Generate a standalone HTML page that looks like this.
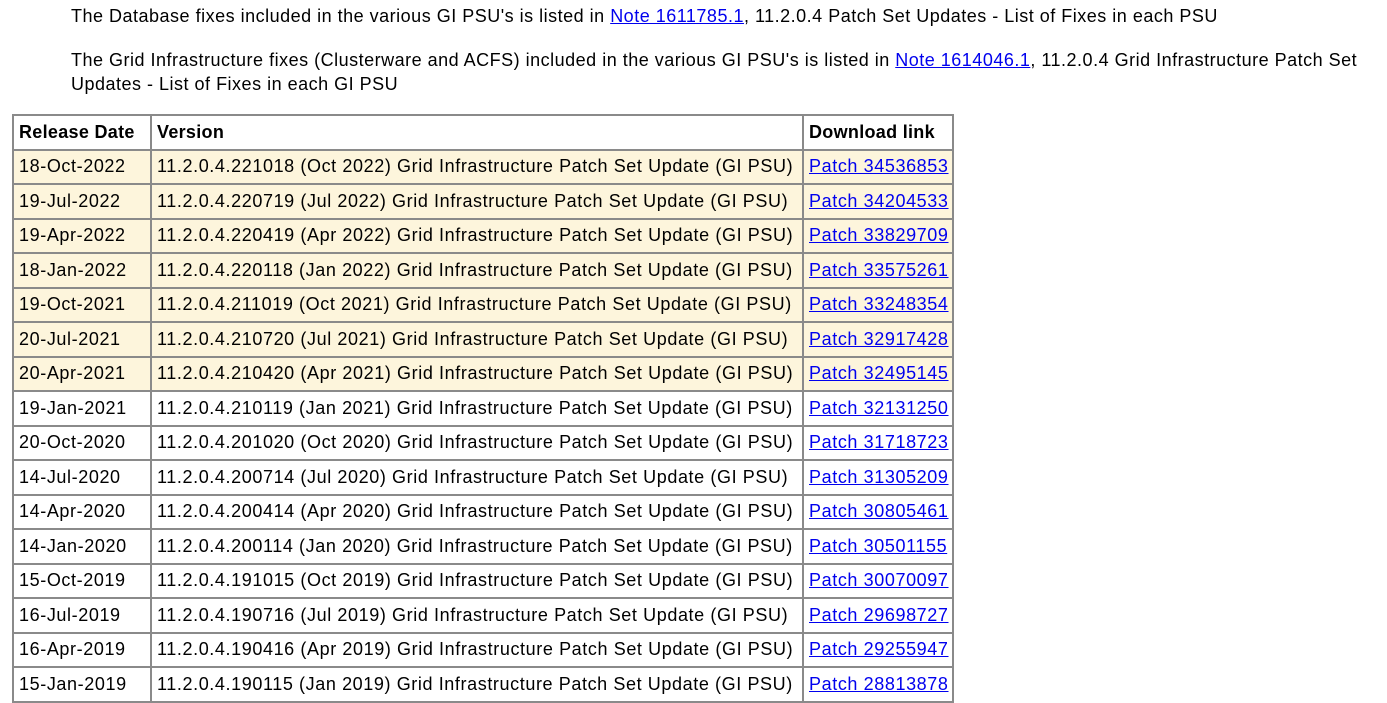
<!DOCTYPE html>
<html><head><meta charset="utf-8"><style>
body{margin:0;background:#fff;font-family:"Liberation Sans",Tahoma,sans-serif;font-size:18px;color:#000;width:1387px;height:702px;overflow:hidden;position:relative;letter-spacing:0.6px}
p{position:absolute;left:71px;margin:0;line-height:24px;width:1310px;letter-spacing:0.5px}
a{color:#0000ee;text-decoration:underline}
table{position:absolute;left:12px;top:114px;border-collapse:collapse;table-layout:fixed;width:940px}
td,th{border:2px solid #8a8a8a;padding:0 0 0 5px;height:32.5px;white-space:nowrap;overflow:hidden;text-align:left;vertical-align:middle}
th{font-weight:bold;letter-spacing:0.3px}
tr.y td{background:#fdf5dc}
</style></head><body>
<p style="top:4px">The Database fixes included in the various GI PSU's is listed in <a>Note 1611785.1</a>, 11.2.0.4 Patch Set Updates - List of Fixes in each PSU</p>
<p style="top:48px">The Grid Infrastructure fixes (Clusterware and ACFS) included in the various GI PSU's is listed in <a>Note 1614046.1</a>, 11.2.0.4 Grid Infrastructure Patch Set<br>Updates - List of Fixes in each GI PSU</p>
<table>
<colgroup><col style="width:138px"><col style="width:652px"><col style="width:150px"></colgroup>
<tr><th>Release Date</th><th>Version</th><th>Download link</th></tr>
<tr class="y"><td>18-Oct-2022</td><td>11.2.0.4.221018 (Oct 2022) Grid Infrastructure Patch Set Update (GI PSU)</td><td><a>Patch 34536853</a></td></tr>
<tr class="y"><td>19-Jul-2022</td><td>11.2.0.4.220719 (Jul 2022) Grid Infrastructure Patch Set Update (GI PSU)</td><td><a>Patch 34204533</a></td></tr>
<tr class="y"><td>19-Apr-2022</td><td>11.2.0.4.220419 (Apr 2022) Grid Infrastructure Patch Set Update (GI PSU)</td><td><a>Patch 33829709</a></td></tr>
<tr class="y"><td>18-Jan-2022</td><td>11.2.0.4.220118 (Jan 2022) Grid Infrastructure Patch Set Update (GI PSU)</td><td><a>Patch 33575261</a></td></tr>
<tr class="y"><td>19-Oct-2021</td><td>11.2.0.4.211019 (Oct 2021) Grid Infrastructure Patch Set Update (GI PSU)</td><td><a>Patch 33248354</a></td></tr>
<tr class="y"><td>20-Jul-2021</td><td>11.2.0.4.210720 (Jul 2021) Grid Infrastructure Patch Set Update (GI PSU)</td><td><a>Patch 32917428</a></td></tr>
<tr class="y"><td>20-Apr-2021</td><td>11.2.0.4.210420 (Apr 2021) Grid Infrastructure Patch Set Update (GI PSU)</td><td><a>Patch 32495145</a></td></tr>
<tr><td>19-Jan-2021</td><td>11.2.0.4.210119 (Jan 2021) Grid Infrastructure Patch Set Update (GI PSU)</td><td><a>Patch 32131250</a></td></tr>
<tr><td>20-Oct-2020</td><td>11.2.0.4.201020 (Oct 2020) Grid Infrastructure Patch Set Update (GI PSU)</td><td><a>Patch 31718723</a></td></tr>
<tr><td>14-Jul-2020</td><td>11.2.0.4.200714 (Jul 2020) Grid Infrastructure Patch Set Update (GI PSU)</td><td><a>Patch 31305209</a></td></tr>
<tr><td>14-Apr-2020</td><td>11.2.0.4.200414 (Apr 2020) Grid Infrastructure Patch Set Update (GI PSU)</td><td><a>Patch 30805461</a></td></tr>
<tr><td>14-Jan-2020</td><td>11.2.0.4.200114 (Jan 2020) Grid Infrastructure Patch Set Update (GI PSU)</td><td><a>Patch 30501155</a></td></tr>
<tr><td>15-Oct-2019</td><td>11.2.0.4.191015 (Oct 2019) Grid Infrastructure Patch Set Update (GI PSU)</td><td><a>Patch 30070097</a></td></tr>
<tr><td>16-Jul-2019</td><td>11.2.0.4.190716 (Jul 2019) Grid Infrastructure Patch Set Update (GI PSU)</td><td><a>Patch 29698727</a></td></tr>
<tr><td>16-Apr-2019</td><td>11.2.0.4.190416 (Apr 2019) Grid Infrastructure Patch Set Update (GI PSU)</td><td><a>Patch 29255947</a></td></tr>
<tr><td>15-Jan-2019</td><td>11.2.0.4.190115 (Jan 2019) Grid Infrastructure Patch Set Update (GI PSU)</td><td><a>Patch 28813878</a></td></tr>
</table>
</body></html>
